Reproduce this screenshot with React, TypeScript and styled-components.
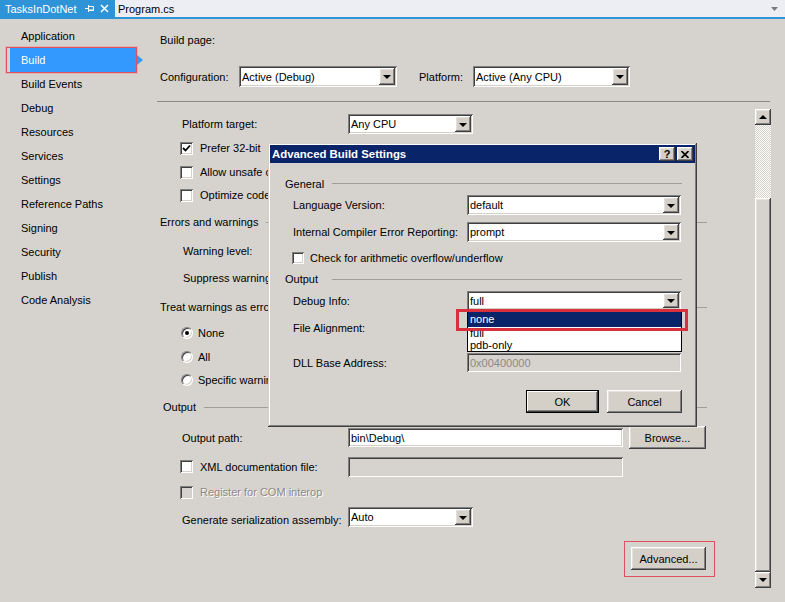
import React from "react";
import styled, { createGlobalStyle, css } from "styled-components";

const GRAY = "#d6d3ce";
const FONT = `"Liberation Sans", Arial, sans-serif`;

const Global = createGlobalStyle`
  html, body { margin: 0; padding: 0; background: ${GRAY}; }
  body { font-family: ${FONT}; font-size: 11px; color: #000; }
  * { box-sizing: border-box; }
`;

const sunken = css`
  box-shadow: inset 1px 1px #808080, inset -1px -1px #ffffff, inset 2px 2px #404040, inset -2px -2px #d4d0c8;
`;
const raised = css`
  box-shadow: inset -1px -1px #404040, inset 1px 1px #ffffff, inset -2px -2px #808080, inset 2px 2px #e4e1dc;
`;

const Screen = styled.div`
  position: relative;
  width: 785px;
  height: 602px;
  overflow: hidden;
  display: flex;
  flex-direction: column;
  background: ${GRAY};
`;

/* ---------- Tab bar ---------- */
const TabBar = styled.div`
  flex: none;
  height: 19px;
  display: flex;
  align-items: stretch;
  background: #eceef4;
  border-bottom: 2px solid #2f93d8;
`;
const ActiveTab = styled.div`
  width: 115px;
  background: #2f93d8;
  color: #fff;
  display: flex;
  align-items: center;
  padding: 0 6px 0 5px;
  font-size: 11px;
`;
const TabIcons = styled.div`
  margin-left: auto;
  display: flex;
  align-items: center;
  gap: 5px;
`;
const Tab = styled.div`
  display: flex;
  align-items: center;
  padding-left: 3px;
  font-size: 11px;
`;
const TabMenu = styled.div`
  margin-left: auto;
  display: flex;
  align-items: center;
  padding-right: 7px;
`;

/* ---------- Body ---------- */
const Body = styled.div`
  flex: 1;
  min-height: 0;
  display: flex;
`;
const Sidebar = styled.nav`
  flex: none;
  width: 145px;
  padding-top: 5px;
  display: flex;
  flex-direction: column;
`;
const NavItem = styled.div<{ $active?: boolean }>`
  position: relative;
  height: 24px;
  width: 126px;
  margin-left: 10px;
  padding-left: 11px;
  display: flex;
  align-items: center;
  ${(p) =>
    p.$active &&
    css`
      background: #3399ff;
      color: #fff;
      &::before {
        content: "";
        position: absolute;
        left: -4px;
        top: -1px;
        right: -1px;
        bottom: -1px;
        border: 1px solid #e2505c;
        box-shadow: 0 0 0 1px rgba(235, 140, 150, 0.45);
      }
      &::after {
        content: "";
        position: absolute;
        left: 127px;
        top: 7px;
        border-left: 6px solid #3399ff;
        border-top: 5px solid transparent;
        border-bottom: 5px solid transparent;
      }
    `}
`;

const Main = styled.main`
  flex: 1;
  min-width: 0;
  display: flex;
  flex-direction: column;
`;
const Header = styled.div`
  padding: 12px 0 0 15px;
`;
const PageTitle = styled.div`
  height: 18px;
  line-height: 18px;
`;
const ConfigRow = styled.div`
  margin-top: 17px;
  height: 21px;
  display: flex;
  align-items: center;
`;
const Label = styled.span<{ $w?: number; $disabled?: boolean }>`
  flex: none;
  white-space: nowrap;
  ${(p) => p.$w !== undefined && css`width: ${p.$w}px;`}
  ${(p) =>
    p.$disabled &&
    css`
      color: #8d8a85;
      text-shadow: 1px 1px #ffffff;
    `}
`;
const Separator = styled.div`
  height: 1px;
  margin: 14px 15px 0 12px;
  background: #8e8b87;
`;

/* ---------- Controls ---------- */
const SelectBox = styled.div<{ $w: number; $h?: number }>`
  flex: none;
  width: ${(p) => p.$w}px;
  height: ${(p) => p.$h ?? 20}px;
  background: #fff;
  ${sunken};
  padding: 2px;
  display: flex;
  align-items: center;
`;
const SelectValue = styled.span`
  flex: 1;
  padding-left: 1px;
  white-space: nowrap;
  overflow: hidden;
`;
const DropBtn = styled.span`
  flex: none;
  width: 16px;
  align-self: stretch;
  background: #d4d0c8;
  ${raised};
  display: flex;
  align-items: center;
  justify-content: center;
  &::after {
    content: "";
    border-top: 4px solid #000;
    border-left: 4px solid transparent;
    border-right: 4px solid transparent;
    margin-top: 1px;
  }
`;
const TextBox = styled.div<{ $w: number; $h?: number; $disabled?: boolean }>`
  flex: none;
  width: ${(p) => p.$w}px;
  height: ${(p) => p.$h ?? 19}px;
  background: ${(p) => (p.$disabled ? "#d6d3ce" : "#fff")};
  color: ${(p) => (p.$disabled ? "#8d8a85" : "#000")};
  ${sunken};
  padding: 0 3px;
  display: flex;
  align-items: center;
  white-space: nowrap;
`;
const Button = styled.button<{ $w: number; $default?: boolean }>`
  flex: none;
  width: ${(p) => p.$w}px;
  height: 23px;
  padding: 0;
  border: 0;
  font: inherit;
  color: #000;
  background: #d4d0c8;
  ${(p) =>
    p.$default
      ? css`
          box-shadow: inset 0 0 0 1px #000, inset -2px -2px #404040, inset 2px 2px #ffffff, inset -3px -3px #808080;
        `
      : raised};
`;
const Outlined = styled.div`
  position: relative;
  display: flex;
  &::before {
    content: "";
    position: absolute;
    left: -7px;
    right: -9px;
    top: -6px;
    bottom: -7px;
    border: 1px solid #e0505c;
  }
`;
const CheckBox = styled.span<{ $disabled?: boolean; $size?: number }>`
  flex: none;
  width: ${(p) => p.$size ?? 13}px;
  height: ${(p) => p.$size ?? 13}px;
  background: ${(p) => (p.$disabled ? "#d6d3ce" : "#fff")};
  ${sunken};
  display: flex;
  align-items: center;
  justify-content: center;
`;
const Radio = styled.span<{ $on?: boolean }>`
  flex: none;
  width: 12px;
  height: 12px;
  border-radius: 50%;
  background: #fff;
  border: 1px solid;
  border-color: #808080 #ffffff #ffffff #808080;
  box-shadow: inset 1px 1px #404040, inset -1px -1px #d4d0c8;
  display: flex;
  align-items: center;
  justify-content: center;
  ${(p) =>
    p.$on &&
    css`
      &::after {
        content: "";
        width: 4px;
        height: 4px;
        border-radius: 50%;
        background: #000;
      }
    `}
`;

/* ---------- Scroll page ---------- */
const ScrollArea = styled.div`
  flex: 1;
  min-height: 0;
  display: flex;
`;
const Content = styled.div`
  flex: 1;
  min-width: 0;
  padding-top: 10px;
  display: flex;
  flex-direction: column;
`;
const Row = styled.div<{ $h: number; $indent: number; $gap?: number }>`
  flex: none;
  height: ${(p) => p.$h}px;
  padding-left: ${(p) => p.$indent}px;
  display: flex;
  align-items: center;
  gap: ${(p) => p.$gap ?? 0}px;
  white-space: nowrap;
`;
const Rule = styled.div<{ $left: number; $right: number }>`
  flex: 1;
  height: 1px;
  background: #a19e99;
  margin-left: ${(p) => p.$left}px;
  margin-right: ${(p) => p.$right}px;
`;
const ButtonRow = styled.div<{ $top: number; $right: number; $gap?: number }>`
  flex: none;
  margin-top: ${(p) => p.$top}px;
  padding-right: ${(p) => p.$right}px;
  display: flex;
  justify-content: flex-end;
  gap: ${(p) => p.$gap ?? 0}px;
`;

const ScrollBar = styled.div`
  flex: none;
  width: 16px;
  margin: 7px 14px 14px 0;
  display: flex;
  flex-direction: column;
`;
const ArrowBtn = styled.div<{ $up?: boolean }>`
  flex: none;
  height: 16px;
  background: #d4d0c8;
  ${raised};
  display: flex;
  align-items: center;
  justify-content: center;
  &::after {
    content: "";
    border-left: 4px solid transparent;
    border-right: 4px solid transparent;
    ${(p) => (p.$up ? "border-bottom: 4px solid #000;" : "border-top: 4px solid #000;")}
  }
`;
const Track = styled.div`
  flex: none;
  height: 73px;
  background: repeating-conic-gradient(#ffffff 0 25%, #d4d0c8 0 50%) 0 0 / 2px 2px;
`;
const Thumb = styled.div`
  flex: 1;
  background: #d6d3ce;
  ${raised};
`;

/* ---------- Dialog ---------- */
const Dialog = styled.div`
  position: absolute;
  left: 268px;
  top: 143px;
  width: 429px;
  height: 284px;
  background: ${GRAY};
  box-shadow: inset -1px -1px #404040, inset 1px 1px #d4d0c8, inset -2px -2px #808080, inset 2px 2px #ffffff;
  padding: 2px;
  display: flex;
  flex-direction: column;
`;
const TitleBar = styled.div`
  flex: none;
  height: 18px;
  background: #0a246a;
  color: #fff;
  font-weight: bold;
  font-size: 11.4px;
  display: flex;
  align-items: center;
  padding: 0 2px 0 2px;
`;
const TitleButtons = styled.div`
  margin-left: auto;
  display: flex;
  gap: 2px;
`;
const TitleBtn = styled.span`
  width: 16px;
  height: 14px;
  background: #d4d0c8;
  ${raised};
  color: #000;
  font-weight: bold;
  font-size: 11px;
  display: flex;
  align-items: center;
  justify-content: center;
`;
const DialogBody = styled.div`
  flex: 1;
  padding-top: 10px;
  display: flex;
  flex-direction: column;
`;
const DropList = styled.div`
  position: absolute;
  left: 199px;
  top: 167px;
  width: 215px;
  height: 42px;
  background: #fff;
  border: 1px solid #000;
  display: flex;
  flex-direction: column;
`;
const DropItem = styled.div<{ $h: number; $sel?: boolean }>`
  flex: none;
  height: ${(p) => p.$h}px;
  line-height: ${(p) => p.$h}px;
  padding-left: 2px;
  ${(p) =>
    p.$sel &&
    css`
      background: #0a246a;
      color: #fff;
    `}
`;
const Marker = styled.div`
  position: absolute;
  left: 188px;
  top: 166px;
  width: 232px;
  height: 22px;
  border: 3px solid #d8303c;
`;

const Check = () => (
  <svg width="9" height="9" viewBox="0 0 9 9">
    <polyline points="1,4 3.5,6.5 8,1.5" fill="none" stroke="#000" strokeWidth="1.8" />
  </svg>
);

const Select = ({ w, h, value }: { w: number; h?: number; value?: string }) => (
  <SelectBox $w={w} $h={h}>
    <SelectValue>{value}</SelectValue>
    <DropBtn />
  </SelectBox>
);

const navItems = [
  "Application",
  "Build",
  "Build Events",
  "Debug",
  "Resources",
  "Services",
  "Settings",
  "Reference Paths",
  "Signing",
  "Security",
  "Publish",
  "Code Analysis",
];

export default function App() {
  return (
    <>
      <Global />
      <Screen>
        <TabBar>
          <ActiveTab>
            TasksInDotNet
            <TabIcons>
              <svg width="10" height="9" viewBox="0 0 10 9">
                <path d="M0 4.5H3M3.5 1V8M3.5 2.5H8.5V6.5H3.5M3.5 6H9" stroke="#fff" fill="none" strokeWidth="1" />
              </svg>
              <svg width="9" height="9" viewBox="0 0 9 9">
                <path d="M1 1L8 8M8 1L1 8" stroke="#fff" strokeWidth="1.5" />
              </svg>
            </TabIcons>
          </ActiveTab>
          <Tab>Program.cs</Tab>
          <TabMenu>
            <svg width="7" height="4" viewBox="0 0 7 4">
              <path d="M0 0H7L3.5 4Z" fill="#7a7a7a" />
            </svg>
          </TabMenu>
        </TabBar>
        <Body>
          <Sidebar>
            {navItems.map((n) => (
              <NavItem key={n} $active={n === "Build"}>
                {n}
              </NavItem>
            ))}
          </Sidebar>
          <Main>
            <Header>
              <PageTitle>Build page:</PageTitle>
              <ConfigRow>
                <Label $w={79}>Configuration:</Label>
                <Select w={158} h={21} value="Active (Debug)" />
                <Label $w={54} style={{ marginLeft: 22 }}>
                  Platform:
                </Label>
                <Select w={157} h={21} value="Active (Any CPU)" />
              </ConfigRow>
            </Header>
            <Separator />
            <ScrollArea>
              <Content>
                <Row $h={24} $indent={37}>
                  <Label $w={166}>Platform target:</Label>
                  <Select w={125} value="Any CPU" />
                </Row>
                <Row $h={24} $indent={35} $gap={7}>
                  <CheckBox>
                    <Check />
                  </CheckBox>
                  <Label>Prefer 32-bit</Label>
                </Row>
                <Row $h={24} $indent={35} $gap={7}>
                  <CheckBox />
                  <Label>Allow unsafe code</Label>
                </Row>
                <Row $h={22} $indent={35} $gap={7}>
                  <CheckBox />
                  <Label>Optimize code</Label>
                </Row>
                <Row $h={32} $indent={15}>
                  <Label>Errors and warnings</Label>
                  <Rule $left={8} $right={48} />
                </Row>
                <Row $h={26} $indent={38}>
                  <Label $w={165}>Warning level:</Label>
                  <Select w={125} />
                </Row>
                <Row $h={28} $indent={38}>
                  <Label $w={165}>Suppress warnings:</Label>
                  <TextBox $w={275} />
                </Row>
                <Row $h={30} $indent={15}>
                  <Label>Treat warnings as errors</Label>
                  <Rule $left={8} $right={48} />
                </Row>
                <Row $h={22} $indent={36} $gap={5}>
                  <Radio $on />
                  <Label>None</Label>
                </Row>
                <Row $h={26} $indent={36} $gap={5}>
                  <Radio />
                  <Label>All</Label>
                </Row>
                <Row $h={20} $indent={36} $gap={5}>
                  <Radio />
                  <Label $w={145}>Specific warnings:</Label>
                  <TextBox $w={275} />
                </Row>
                <Row $h={34} $indent={18}>
                  <Label>Output</Label>
                  <Rule $left={8} $right={48} />
                </Row>
                <Row $h={27} $indent={37}>
                  <Label $w={166}>Output path:</Label>
                  <TextBox $w={275}>bin\Debug\</TextBox>
                  <Button $w={77} style={{ marginLeft: 6 }}>
                    Browse...
                  </Button>
                </Row>
                <Row $h={31} $indent={35} $gap={7}>
                  <CheckBox />
                  <Label $w={141}>XML documentation file:</Label>
                  <TextBox $w={275} $h={20} $disabled />
                </Row>
                <Row $h={20} $indent={35} $gap={7}>
                  <CheckBox $disabled />
                  <Label $disabled>Register for COM interop</Label>
                </Row>
                <Row $h={30} $indent={37}>
                  <Label $w={166} style={{ paddingTop: 5 }}>
                    Generate serialization assembly:
                  </Label>
                  <Select w={125} value="Auto" />
                </Row>
                <ButtonRow $top={15} $right={49}>
                  <Outlined>
                    <Button $w={75}>Advanced...</Button>
                  </Outlined>
                </ButtonRow>
              </Content>
              <ScrollBar>
                <ArrowBtn $up />
                <Track />
                <Thumb />
                <ArrowBtn />
              </ScrollBar>
            </ScrollArea>
          </Main>
        </Body>

        <Dialog>
          <TitleBar>
            Advanced Build Settings
            <TitleButtons>
              <TitleBtn>?</TitleBtn>
              <TitleBtn>
                <svg width="8" height="7" viewBox="0 0 8 7">
                  <path d="M0.5 0L7.5 7M7.5 0L0.5 7" stroke="#000" strokeWidth="1.6" />
                </svg>
              </TitleBtn>
            </TitleButtons>
          </TitleBar>
          <DialogBody>
            <Row $h={21} $indent={15}>
              <Label $w={47}>General</Label>
              <Rule $left={0} $right={13} />
            </Row>
            <Row $h={22} $indent={23}>
              <Label $w={174}>Language Version:</Label>
              <Select w={214} value="default" />
            </Row>
            <Row $h={32} $indent={23}>
              <Label $w={174}>Internal Compiler Error Reporting:</Label>
              <Select w={214} value="prompt" />
            </Row>
            <Row $h={19} $indent={22} $gap={6}>
              <CheckBox $size={12} />
              <Label>Check for arithmetic overflow/underflow</Label>
            </Row>
            <Row $h={24} $indent={15}>
              <Label $w={47}>Output</Label>
              <Rule $left={0} $right={13} />
            </Row>
            <Row $h={19} $indent={23}>
              <Label $w={174}>Debug Info:</Label>
              <Select w={214} h={19} value="full" />
            </Row>
            <Row $h={36} $indent={23}>
              <Label $w={174}>File Alignment:</Label>
              <Select w={214} />
            </Row>
            <Row $h={33} $indent={23}>
              <Label $w={174}>DLL Base Address:</Label>
              <TextBox $w={214} $disabled>
                0x00400000
              </TextBox>
            </Row>
            <ButtonRow $top={11} $right={13} $gap={8}>
              <Button $w={73} $default>
                OK
              </Button>
              <Button $w={75}>Cancel</Button>
            </ButtonRow>
          </DialogBody>
          <DropList>
            <DropItem $h={16} $sel>
              none
            </DropItem>
            <DropItem $h={12}>full</DropItem>
            <DropItem $h={12}>pdb-only</DropItem>
          </DropList>
          <Marker />
        </Dialog>
      </Screen>
    </>
  );
}
